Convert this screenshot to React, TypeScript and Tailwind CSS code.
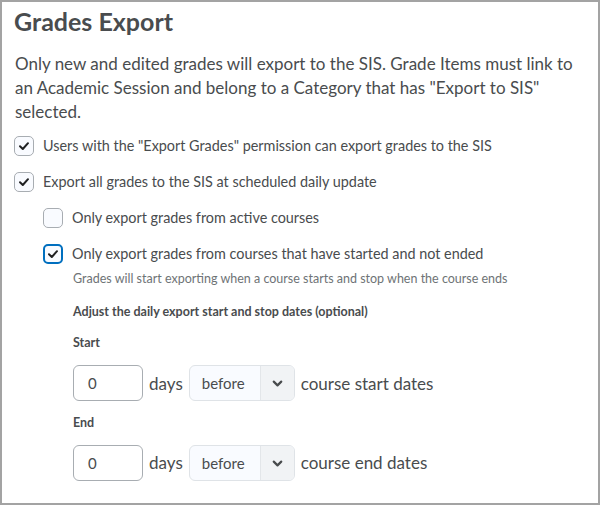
import { ChevronDown } from "lucide-react";

function Check({ checked, focus }: { checked?: boolean; focus?: boolean }) {
  return (
    <span
      className={
        "flex h-5 w-5 shrink-0 items-center justify-center rounded-[5px] bg-[#f9fbff] " +
        (focus ? "border-2 border-[#006fbf]" : "border border-[#a8adb2]")
      }
    >
      {checked && (
        <svg width="12" height="12" viewBox="0 0 12 12" fill="none">
          <path d="M2 6.3 L4.8 9 L10 3.2" stroke="#202122" strokeWidth="2" strokeLinecap="round" strokeLinejoin="round" />
        </svg>
      )}
    </span>
  );
}

function Row({ children, className }: { children: React.ReactNode; className: string }) {
  return <div className={"flex h-5 items-center gap-[9px] text-[14.4px] " + className}>{children}</div>;
}

function DateRow({ label }: { label: string }) {
  return (
    <div className="flex items-center gap-[6px]">
      <div className="flex h-9 w-[70px] items-center rounded-md border border-[#a8adb2] bg-white px-[14px] text-[15px] text-[#494c4e]">
        0
      </div>
      <span className="text-[17px] text-[#494c4e]">days</span>
      <div className="flex h-9 w-[106px] overflow-hidden rounded-md border border-[#dfe3e7] bg-[#f9fbff]">
        <span className="flex flex-1 items-center pl-3 text-[15px] text-[#494c4e]">before</span>
        <span className="flex w-[34px] items-center justify-center border-l border-[#e3e6e9] bg-[#f1f3f5]">
          <ChevronDown size={15} strokeWidth={3.5} className="text-[#494c4e]" />
        </span>
      </div>
      <span className="text-[17px] text-[#494c4e]">{label}</span>
    </div>
  );
}

export default function App() {
  return (
    <div
      className="h-[505px] w-[600px] border-2 border-[#a3a3a3] bg-white pl-[12px] pr-4 text-[#494c4e]"
      style={{ fontFamily: "Lato, 'Noto Sans', sans-serif" }}
    >
      <h1 className="pt-[2px] text-[25px] font-bold leading-[34px] text-[#494c4e]">Grades Export</h1>
      <p className="mt-[14px] pl-[1px] text-[17px] leading-6">
        Only new and edited grades will export to the SIS. Grade Items must link to an Academic Session and
        belong to a Category that has "Export to SIS" selected.
      </p>
      <Row className="mt-[12px]">
        <Check checked />
        <span>Users with the "Export Grades" permission can export grades to the SIS</span>
      </Row>
      <Row className="mt-[16px]">
        <Check checked />
        <span>Export all grades to the SIS at scheduled daily update</span>
      </Row>
      <div className="pl-[29px]">
        <Row className="mt-[16px]">
          <Check />
          <span>Only export grades from active courses</span>
        </Row>
        <Row className="mt-[16px]">
          <Check checked focus />
          <span>Only export grades from courses that have started and not ended</span>
        </Row>
        <div className="pl-[30px]">
          <p className="mt-[6px] text-[12.5px] text-[#6e7376]">
            Grades will start exporting when a course starts and stop when the course ends
          </p>
          <p className="mt-[14px] text-[12.5px] font-bold">Adjust the daily export start and stop dates (optional)</p>
          <p className="mt-[12px] text-[12.5px] font-bold">Start</p>
          <div className="mt-[13px]">
            <DateRow label="course start dates" />
          </div>
          <p className="mt-[13px] text-[12.5px] font-bold">End</p>
          <div className="mt-[12px]">
            <DateRow label="course end dates" />
          </div>
        </div>
      </div>
    </div>
  );
}
